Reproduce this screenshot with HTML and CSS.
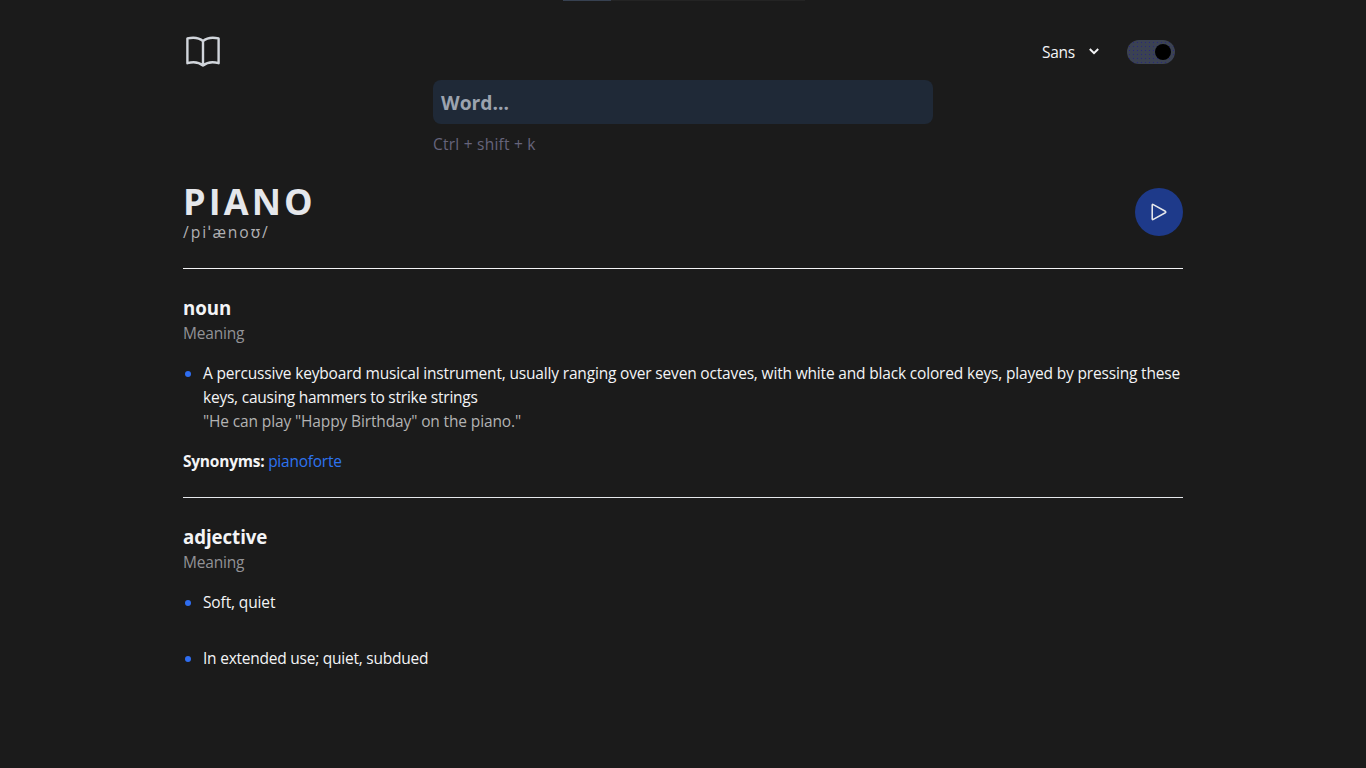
FILE: index.html
```html
<!DOCTYPE html>
<html lang="en">
<head>
<meta charset="utf-8">
<title>Dictionary</title>
<link rel="stylesheet" href="styles.css">
</head>
<body>
<div class="progress"></div>
<main class="page">
  <header class="topbar">
    <svg class="book" viewBox="0 0 40 40" fill="none" stroke="currentColor" stroke-width="2.4" stroke-linejoin="round" stroke-linecap="round">
      <path d="M20 9C16 5.6 10 5.2 4.4 6.4V31.2C10 29.7 16 30.3 20 33.6C24 30.3 30 29.7 35.6 31.2V6.4C30 5.2 24 5.6 20 9ZM20 9V33.6"/>
    </svg>
    <div class="controls">
      <button class="font-select"><span>Sans</span>
        <svg class="chevron" viewBox="0 0 12 8" fill="none" stroke="currentColor" stroke-width="2"><path d="M1.8 1L6 5.2L10.2 1"/></svg>
      </button>
      <div class="toggle"><span class="knob"></span></div>
    </div>
  </header>
  <div class="search">
    <div class="field"><span class="placeholder">Word...</span></div>
    <div class="hint"><span>Ctrl + shift + k</span></div>
  </div>
  <section class="entry">
    <div class="word">
      <h1>PIANO</h1>
      <p class="phonetic">/piˈænoʊ/</p>
    </div>
    <button class="play" aria-label="Play">
      <svg viewBox="0 0 24 24" fill="none" stroke="currentColor" stroke-width="1.7" stroke-linejoin="round"><path d="M4.6 4.5V19.5Q4.7 20.7 5.8 20.1L18.9 12.8Q20 12 18.9 11.2L5.8 3.9Q4.7 3.3 4.6 4.5Z"/></svg>
    </button>
  </section>
  <section class="meaning">
    <h2 class="noun">noun</h2>
    <p class="label">Meaning</p>
    <ul>
      <li><p class="long">A percussive keyboard musical instrument, usually ranging over seven octaves, with white and black colored keys, played by pressing these<br><span class="second">keys, causing hammers to strike strings</span></p>
      <p class="example">"He can play "Happy Birthday" on the piano."</p></li>
    </ul>
    <p class="synonyms"><b>Synonyms:</b> <a>pianoforte</a></p>
  </section>
  <section class="meaning">
    <h2 class="adjective">adjective</h2>
    <p class="label">Meaning</p>
    <ul class="spaced">
      <li><p class="soft">Soft, quiet</p></li>
      <li><p class="extended">In extended use; quiet, subdued</p></li>
    </ul>
  </section>
</main>
</body>
</html>
```
FILE: styles.css
```css
* { box-sizing: border-box; margin: 0; padding: 0; }
body { height: 768px; overflow: hidden; background: #1b1b1b; color: #f3f4f6; font: 16px/24px "Open Sans", "Noto Sans", sans-serif; position: relative; }
button { background: none; border: 0; color: inherit; font: inherit; }
.progress { position: absolute; top: 0; left: 563px; width: 242px; height: 1px; background: linear-gradient(to right, #374151 48px, #242424 48px); }
.page { width: 1000px; margin: 0 auto; padding-top: 24px; white-space: nowrap; }
.topbar { display: flex; justify-content: space-between; align-items: center; height: 56px; }
.book { width: 40px; height: 40px; color: #d1d5db; }
.controls { display: flex; align-items: center; padding-right: 8px; }
.font-select { display: flex; align-items: center; justify-content: space-between; width: 58px; margin-right: 27px; font-size: 15.5px; letter-spacing: -0.25px; }
.chevron { width: 12px; height: 8px; }
.toggle { display: flex; align-items: center; justify-content: flex-end; width: 48px; height: 24px; padding: 4px; border-radius: 12px; background: radial-gradient(circle at 2.5px 2.5px, #28287a 0.5px, transparent 0.9px) 0 0 / 4px 4px #3b4252; }
.knob { width: 16px; height: 16px; border-radius: 50%; background: #000; }
.search { width: 500px; margin: 0 auto; }
.field { display: flex; align-items: center; height: 44px; padding: 1px 8px 0; border-radius: 8px; background: #1f2937; color: #9ca3af; font-size: 19.3px; font-weight: 700; }
.hint { margin-top: 8px; color: #66647b; font-size: 15.5px; letter-spacing: 0.23px; }
.entry { display: flex; justify-content: space-between; align-items: center; height: 113px; padding-bottom: 1px; border-bottom: 1px solid #f3f4f6; }
.word { padding-top: 2px; }
.entry h1 { font-size: 36px; line-height: 40px; letter-spacing: 3.1px; color: #e5e7eb; }
.phonetic { line-height: 24px; margin-top: -2px; font-size: 15.7px; letter-spacing: 1.9px; color: #b0b0b3; }
.play { display: grid; place-items: center; width: 48px; height: 48px; border-radius: 50%; background: #1e3a8a; color: #e5e7eb; }
.play svg { width: 22px; height: 22px; }
.meaning { padding-top: 25px; height: 229px; border-bottom: 1px solid #e5e7eb; }
.meaning:last-child { border: 0; }
h2 { font-size: 18.7px; line-height: 28px; letter-spacing: -0.07px; }
.label { margin-top: -1px; color: #929296; font-size: 15.5px; letter-spacing: -0.2px; }
ul { list-style: none; padding-left: 20px; margin-top: 16px; font-size: 15.5px; letter-spacing: -0.2px; }
li { position: relative; }
li::before { content: ""; position: absolute; left: -18px; top: 10px; width: 6px; height: 6px; border-radius: 50%; background: #2f6df0; }
.spaced { display: grid; gap: 32px; }
.soft { letter-spacing: -0.13px; }
.extended { letter-spacing: -0.235px; }
.long { letter-spacing: -0.173px; }
.second { letter-spacing: -0.225px; }
.example { color: #b3b3b3; letter-spacing: -0.13px; }
.synonyms { margin-top: 16px; font-size: 15.5px; letter-spacing: -0.24px; }
.synonyms a { color: #2d73f0; }
```
